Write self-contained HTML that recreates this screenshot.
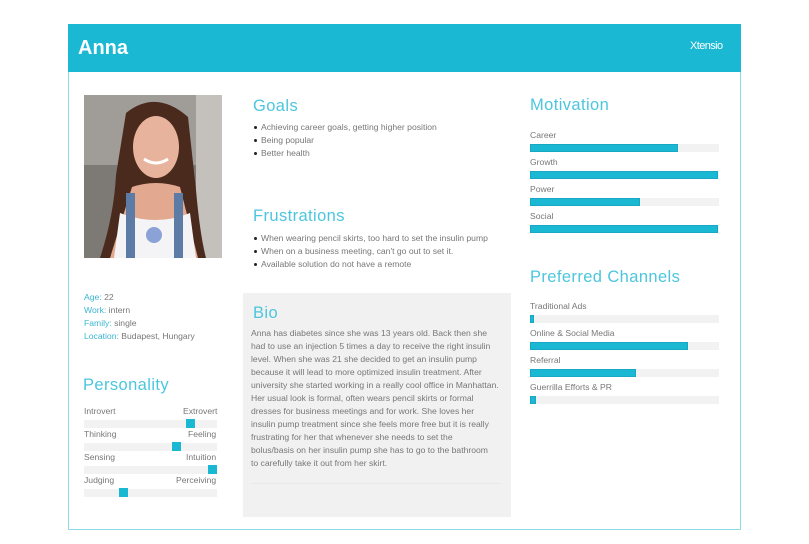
<!DOCTYPE html>
<html><head><meta charset="utf-8"><style>
*{margin:0;padding:0;box-sizing:border-box}
body{width:809px;height:544px;background:#fff;position:relative;font-family:"Liberation Sans",sans-serif;color:#777;overflow:hidden}
.a{position:absolute;white-space:nowrap}
.frame{position:absolute;left:68px;top:24px;width:673px;height:506px;border:1px solid #8fdbe8}
.hdr{position:absolute;left:68px;top:24px;width:673px;height:48px;background:#1bb8d4}
.h{position:absolute;font-size:16.5px;color:#4cc6de;font-weight:normal;white-space:nowrap;letter-spacing:.4px}
.t{font-size:8.6px;color:#777}
.bar{position:absolute;background:#f2f2f2;height:8px}
.fill{position:absolute;left:0;top:0;height:8px;background:#1bb8d4;border:1px solid #17a9c4}
.mk{position:absolute;width:9px;height:9px;background:#1bb8d4}
.li{position:absolute;font-size:8.6px;color:#777;white-space:nowrap}
.li:before{content:"";position:absolute;left:-7px;top:4px;width:3px;height:3px;border-radius:50%;background:#222}
.bl{color:#3ab6d2}
</style></head><body>
<div class="frame"></div>
<div class="hdr"></div>
<div class="a" style="left:78px;top:37px;font-size:20px;font-weight:bold;color:#fff">Anna</div>
<div class="a" style="left:690px;top:40px;font-size:11px;color:#fff;letter-spacing:-.6px">Xtensio</div>

<svg class="a" style="left:84px;top:95px" width="138" height="163" viewBox="0 0 138 163">
<rect width="138" height="163" fill="#7d7a76"/>
<rect width="138" height="70" fill="#a09d99"/>
<rect x="112" y="0" width="26" height="163" fill="#c4c1bc"/>
<path d="M42 18 Q72 -6 104 22 L112 95 Q116 140 122 163 L16 163 Q30 120 32 80 Z" fill="#4a2a1c"/>
<ellipse cx="72" cy="52" rx="23" ry="31" fill="#e8b39c"/>
<path d="M48 92 Q72 84 96 92 L114 163 L26 163 Z" fill="#e2a990"/>
<path d="M36 118 Q72 132 106 118 L112 163 L30 163 Z" fill="#f4f4f6"/>
<rect x="42" y="98" width="9" height="65" fill="#5c7ca6"/>
<rect x="90" y="98" width="9" height="65" fill="#5c7ca6"/>
<circle cx="70" cy="140" r="8" fill="#8aa2d6"/>
<path d="M60 64 Q72 72 84 64" stroke="#fff" stroke-width="3" fill="none"/>
</svg>

<div class="a t" style="left:84px;top:292px"><span class="bl">Age:</span> 22</div>
<div class="a t" style="left:84px;top:305px"><span class="bl">Work:</span> intern</div>
<div class="a t" style="left:84px;top:318px"><span class="bl">Family:</span> single</div>
<div class="a t" style="left:84px;top:331px"><span class="bl">Location:</span> Budapest, Hungary</div>

<div class="h" style="left:83px;top:376px">Personality</div>
<div class="a t" style="left:84px;top:406px">Introvert</div><div class="a t" style="left:183px;top:406px">Extrovert</div>
<div class="bar" style="left:84px;top:420px;width:133px"></div><div class="mk" style="left:186px;top:419px"></div>
<div class="a t" style="left:84px;top:429px">Thinking</div><div class="a t" style="left:188px;top:429px">Feeling</div>
<div class="bar" style="left:84px;top:443px;width:133px"></div><div class="mk" style="left:172px;top:442px"></div>
<div class="a t" style="left:84px;top:452px">Sensing</div><div class="a t" style="left:186px;top:452px">Intuition</div>
<div class="bar" style="left:84px;top:466px;width:133px"></div><div class="mk" style="left:208px;top:465px"></div>
<div class="a t" style="left:84px;top:475px">Judging</div><div class="a t" style="left:176px;top:475px">Perceiving</div>
<div class="bar" style="left:84px;top:489px;width:133px"></div><div class="mk" style="left:119px;top:488px"></div>

<div class="h" style="left:253px;top:97px">Goals</div>
<div class="li" style="left:261px;top:122px">Achieving career goals, getting higher position</div>
<div class="li" style="left:261px;top:135px">Being popular</div>
<div class="li" style="left:261px;top:148px">Better health</div>

<div class="h" style="left:253px;top:207px">Frustrations</div>
<div class="li" style="left:261px;top:233px">When wearing pencil skirts, too hard to set the insulin pump</div>
<div class="li" style="left:261px;top:246px">When on a business meeting, can't go out to set it.</div>
<div class="li" style="left:261px;top:259px">Available solution do not have a remote</div>

<div class="a" style="left:243px;top:293px;width:268px;height:224px;background:#f1f1f1"></div>
<div class="h" style="left:253px;top:304px">Bio</div>
<div class="a t" style="left:251px;top:327px;line-height:13px;white-space:normal;width:262px">Anna has diabetes since she was 13 years old. Back then she<br>had to use an injection 5 times a day to receive the right insulin<br>level. When she was 21 she decided to get an insulin pump<br>because it will lead to more optimized insulin treatment. After<br>university she started working in a really cool office in Manhattan.<br>Her usual look is formal, often wears pencil skirts or formal<br>dresses for business meetings and for work. She loves her<br>insulin pump treatment since she feels more free but it is really<br>frustrating for her that whenever she needs to set the<br>bolus/basis on her insulin pump she has to go to the bathroom<br>to carefully take it out from her skirt.</div>
<div class="a" style="left:251px;top:483px;width:250px;height:1px;background:#e9e9e9"></div>

<div class="h" style="left:530px;top:96px">Motivation</div>
<div class="a t" style="left:530px;top:130px">Career</div>
<div class="bar" style="left:530px;top:144px;width:189px"><div class="fill" style="width:148px"></div></div>
<div class="a t" style="left:530px;top:157px">Growth</div>
<div class="bar" style="left:530px;top:171px;width:189px"><div class="fill" style="width:188px"></div></div>
<div class="a t" style="left:530px;top:184px">Power</div>
<div class="bar" style="left:530px;top:198px;width:189px"><div class="fill" style="width:110px"></div></div>
<div class="a t" style="left:530px;top:211px">Social</div>
<div class="bar" style="left:530px;top:225px;width:189px"><div class="fill" style="width:188px"></div></div>

<div class="h" style="left:530px;top:268px">Preferred Channels</div>
<div class="a t" style="left:530px;top:301px">Traditional Ads</div>
<div class="bar" style="left:530px;top:315px;width:189px"><div class="fill" style="width:4px"></div></div>
<div class="a t" style="left:530px;top:328px">Online &amp; Social Media</div>
<div class="bar" style="left:530px;top:342px;width:189px"><div class="fill" style="width:158px"></div></div>
<div class="a t" style="left:530px;top:355px">Referral</div>
<div class="bar" style="left:530px;top:369px;width:189px"><div class="fill" style="width:106px"></div></div>
<div class="a t" style="left:530px;top:382px">Guerrilla Efforts &amp; PR</div>
<div class="bar" style="left:530px;top:396px;width:189px"><div class="fill" style="width:6px"></div></div>
</body></html>
